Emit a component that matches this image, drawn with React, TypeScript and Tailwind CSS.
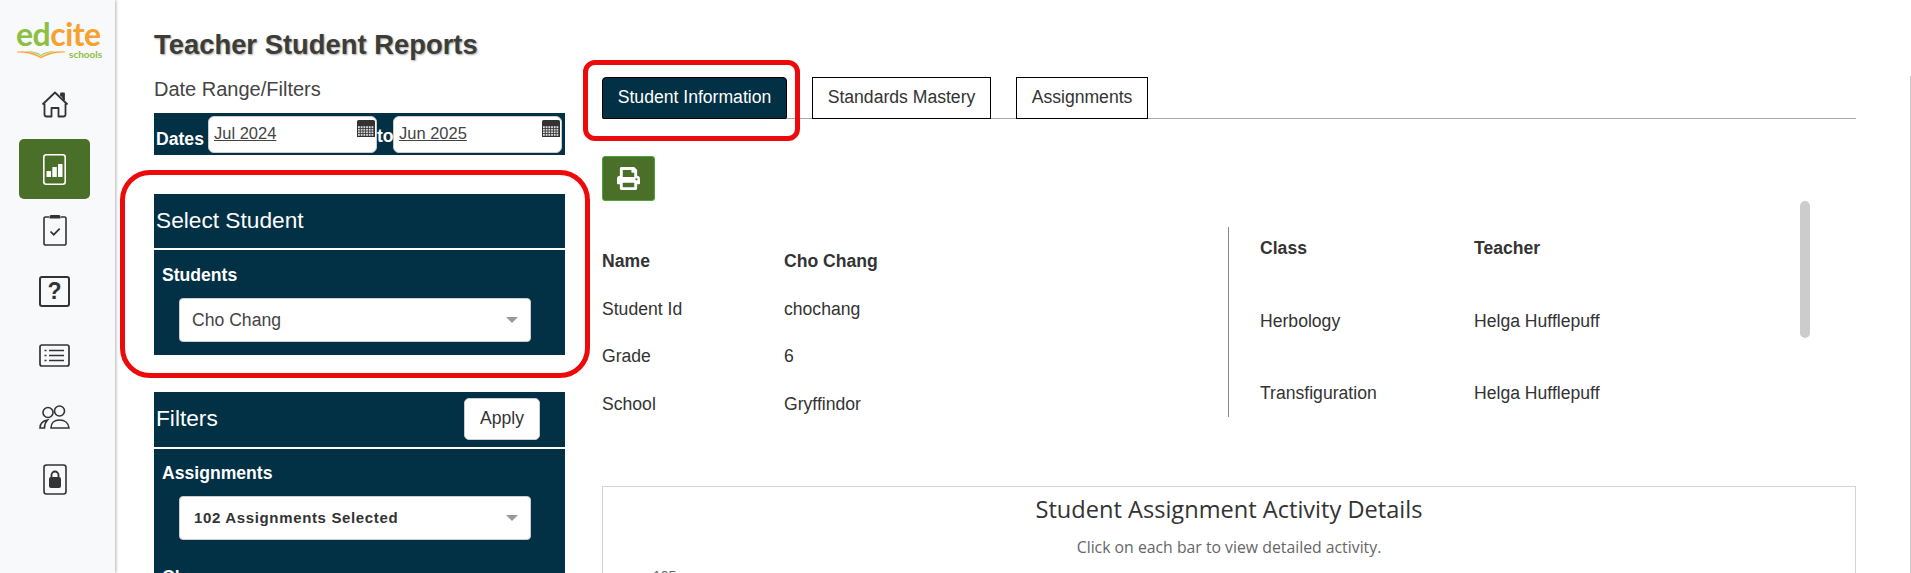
import { FaPrint } from "react-icons/fa";

const sans = "font-['Liberation_Sans',Arial,sans-serif]";

function HomeIcon() {
  return (
    <svg width="28" height="28" viewBox="0 0 28 28" fill="none" stroke="#333" strokeWidth="1.8" strokeLinejoin="round">
      <path d="M1.500 13.500 14 1.500l12.500 12" />
      <path d="M20 5V2.500h3V9" fill="#333" />
      <path d="M3.500 12.500v11.500a2 2 0 0 0 2 1.500h5v-8.500h7v8.500h5a2 2 0 0 0 2-1.500V12.500" />
    </svg>
  );
}

function ReportIcon() {
  return (
    <svg width="23" height="31" viewBox="0 0 23 31" fill="none">
      <rect x="0.800" y="0.800" width="21.400" height="29.400" rx="2.500" stroke="#fff" strokeWidth="1.600" />
      <rect x="3.500" y="17" width="4.500" height="6" rx="0.500" fill="#fff" />
      <rect x="9.300" y="13" width="4.500" height="10" rx="0.500" fill="#fff" />
      <rect x="15" y="10" width="4.500" height="13" rx="0.500" fill="#fff" />
    </svg>
  );
}

function ClipboardIcon() {
  return (
    <svg width="24" height="32" viewBox="0 0 24 32" fill="none">
      <path d="M6 3H2.500A1.500 1.500 0 0 0 1 4.500v25A1.500 1.500 0 0 0 2.500 31h19a1.500 1.500 0 0 0 1.500-1.500v-25A1.500 1.500 0 0 0 21.500 3H18" stroke="#333" strokeWidth="1.600" />
      <path d="M6.500 4.500V2.500A1.500 1.500 0 0 1 8 1h8a1.500 1.500 0 0 1 1.500 1.500v2z" fill="#333" />
      <path d="m7.500 17.500 3.200 3.200 6-6" stroke="#333" strokeWidth="1.700" />
    </svg>
  );
}

function QuestionIcon() {
  return (
    <div className="flex h-[31px] w-[31px] items-center justify-center rounded-[3px] border-2 border-[#333] text-[23px] leading-none font-bold text-[#333]">
      ?
    </div>
  );
}

function ListIcon() {
  return (
    <svg width="31" height="23" viewBox="0 0 31 23" fill="none" stroke="#333">
      <rect x="1" y="1" width="29" height="21" rx="2" strokeWidth="1.700" />
      <path d="M10 6.500h15M10 11.500h15M10 16.500h15" strokeWidth="1.700" />
      <path d="M5.500 6.500h2M5.500 11.500h2M5.500 16.500h2" strokeWidth="1.700" />
    </svg>
  );
}

function PeopleIcon() {
  return (
    <svg width="31" height="24" viewBox="0 0 31 24" fill="none" stroke="#333" strokeWidth="1.600">
      <circle cx="9" cy="7.500" r="5" />
      <circle cx="20.500" cy="6" r="5" />
      <path d="M1 23c0-4 2-7 7.500-8-2 2-3 5-3 8z" />
      <path d="M12 23c0-5 3.500-8 8.500-8s9 3 9.500 8z" />
    </svg>
  );
}

function LockIcon() {
  return (
    <svg width="24" height="31" viewBox="0 0 24 31" fill="none">
      <rect x="1" y="1" width="22" height="29" rx="2.500" stroke="#333" strokeWidth="1.600" />
      <path d="M8.500 14v-3a3.500 3.500 0 0 1 7 0v3" stroke="#333" strokeWidth="1.800" />
      <rect x="6" y="13" width="12" height="11" rx="2" fill="#333" />
    </svg>
  );
}

function CalendarIcon() {
  const cells = [];
  for (let r = 0; r < 4; r++) {
    for (let c = 0; c < 6; c++) {
      cells.push(<rect key={`${r}-${c}`} x={1 + c * 2.700} y={7.200 + r * 2.600} width="1.800" height="1.800" fill="#ddd" />);
    }
  }
  return (
    <svg width="18" height="18" viewBox="0 0 18 18">
      <path d="M0 6V2.500A1.500 1.500 0 0 1 1.500 1h15A1.500 1.500 0 0 1 18 2.500V6z" fill="#333" />
      <rect x="0" y="6" width="18" height="12" fill="#333" />
      {cells}
    </svg>
  );
}

function DateInput({ value }: { value: string }) {
  return (
    <div className="relative h-[37px] w-[169px] shrink-0 rounded-[6px] border border-[#ccc] bg-white pl-[5px] text-[16.500px] leading-[32px] text-[#444] underline">
      {value}
      <span className="absolute top-[2px] right-[1px]">
        <CalendarIcon />
      </span>
    </div>
  );
}

function SelectBox({ label, bold }: { label: string; bold?: boolean }) {
  return (
    <div className="ml-[25px] flex h-[44px] w-[352px] items-center justify-between rounded-[4px] border border-[#ccc] bg-white pr-[12px] pl-[12px]">
      <span className={bold ? "pl-[2px] text-[15px] font-bold tracking-[0.65px] text-[#333]" : "text-[17.6px] text-[#444]"}>{label}</span>
      <svg width="12" height="6" viewBox="0 0 12 6">
        <path d="M0 0h12L6 6z" fill="#999" />
      </svg>
    </div>
  );
}

const info = [
  ["Name", "Cho Chang"],
  ["Student Id", "chochang"],
  ["Grade", "6"],
  ["School", "Gryffindor"],
];

const classes = [
  ["Class", "Teacher"],
  ["Herbology", "Helga Hufflepuff"],
  ["Transfiguration", "Helga Hufflepuff"],
];

export default function App() {
  return (
    <div className={`${sans} relative flex h-[573px] w-full overflow-hidden bg-white text-[#333]`}>
      <aside className="flex w-[115px] shrink-0 flex-col bg-[#f8f9fa] pl-[19px] shadow-[1px_0_3px_rgba(0,0,0,0.3)]">
        <div className="-ml-[3px] flex h-[75px] w-[90px] flex-col pt-[19px]">
          <div className="font-['Lato',sans-serif] text-[32px] leading-[30px] font-bold tracking-[-0.5px]">
            <span className="text-[#8dbf45]">ed</span>
            <span className="text-[#f9a12e]">cite</span>
          </div>
          <div className="flex items-center">
            <svg width="50" height="9" viewBox="0 0 50 9" fill="none">
              <path d="M1 2c9-1 17 0 24 5 7-5 15-6 24-5-9 0-17 2-24 6C18 4 10 2 1 2z" fill="#f9a12e" stroke="#f9a12e" strokeWidth="0.500" />
              <path d="M10 1c6 0 11 1 15 4 4-3 9-4 14-4-5 1-10 2-14 5-4-3-9-4-15-5z" fill="#8dbf45" />
            </svg>
            <span className="ml-[3px] font-['Lato',sans-serif] text-[10px] leading-none font-bold text-[#8dbf45]">schools</span>
          </div>
        </div>
        <div className="flex h-[60px] w-[71px] items-center justify-center">
          <HomeIcon />
        </div>
        <div className="mt-[4px] flex h-[60px] w-[71px] items-center justify-center rounded-[5px] bg-[#4a6f28]">
          <ReportIcon />
        </div>
        <div className="mt-[1px] flex h-[60px] w-[71px] items-center justify-center">
          <ClipboardIcon />
        </div>
        <div className="mt-[1px] flex h-[60px] w-[71px] items-center justify-center">
          <QuestionIcon />
        </div>
        <div className="mt-[4px] flex h-[60px] w-[71px] items-center justify-center">
          <ListIcon />
        </div>
        <div className="mt-[2px] flex h-[60px] w-[71px] items-center justify-center">
          <PeopleIcon />
        </div>
        <div className="mt-[2px] flex h-[60px] w-[71px] items-center justify-center">
          <LockIcon />
        </div>
      </aside>

      <main className="min-w-0 flex-1 pl-[39px]">
        <h1 className="h-[77px] pt-[28px] text-[27.400px] leading-[34px] font-bold text-[#3d3d38] [text-shadow:1px_1px_2px_rgba(0,0,0,0.35)]">
          Teacher Student Reports
        </h1>

        <div className="flex">
          <div className="w-[411px] shrink-0">
            <div className="mb-[12px] h-[24px] text-[20px] leading-[24px] text-[#444]">Date Range/Filters</div>

            <div className="flex h-[42px] items-center bg-[#023045] pl-[2px] text-white">
              <span className="mt-[10px] w-[52px] text-[17.6px] font-bold">Dates</span>
              <DateInput value="Jul 2024" />
              <span className="mt-[4px] w-[16px] text-center text-[17.6px] font-bold">to</span>
              <DateInput value="Jun 2025" />
            </div>

            <div className="mt-[39px] flex h-[54px] items-center bg-[#023045] pb-[2px] pl-[2px] text-[22.700px] text-white">Select Student</div>
            <div className="mt-[2px] bg-[#023045] pt-[13px] pb-[13px]">
              <div className="h-[24px] pl-[8px] text-[17.6px] leading-[24px] font-bold text-white">Students</div>
              <div className="mt-[11px]">
                <SelectBox label="Cho Chang" />
              </div>
            </div>

            <div className="mt-[37px] flex h-[55px] items-center justify-between bg-[#023045] pr-[25px] pb-[2px] pl-[2px] text-[22.700px] text-white">
              Filters
              <button className="h-[42px] w-[76px] rounded-[5px] border border-[#ccc] bg-white text-[17.6px] text-[#333]">Apply</button>
            </div>
            <div className="mt-[2px] bg-[#023045] pt-[12px] pb-[20px]">
              <div className="h-[24px] pl-[8px] text-[17.6px] leading-[24px] font-bold text-white">Assignments</div>
              <div className="mt-[11px]">
                <SelectBox label="102 Assignments Selected" bold />
              </div>
              <div className="mt-[25px] h-[24px] pl-[8px] text-[17.6px] leading-[24px] font-bold text-white">Class</div>
            </div>
          </div>

          <div className="ml-[37px] w-[1254px] shrink-0">
            <div className="flex h-[42px] border-b border-[#aaa]">
              <div className="flex h-[42px] w-[185px] items-center justify-center rounded-t-[4px] rounded-b-[2px] border border-black bg-[#023045] pb-[2px] text-[17.6px] text-white">
                Student Information
              </div>
              <div className="ml-[25px] flex h-[42px] w-[179px] items-center justify-center border border-black bg-white pb-[2px] text-[17.6px] text-[#333]">
                Standards Mastery
              </div>
              <div className="ml-[25px] flex h-[42px] w-[132px] items-center justify-center border border-black bg-white pb-[2px] text-[17.6px] text-[#333]">
                Assignments
              </div>
            </div>

            <button className="mt-[37px] flex h-[45px] w-[53px] items-center justify-center rounded-[3px] border border-[#4fa33b] bg-[#4a6f28]">
              <FaPrint className="text-[23px] text-white" />
            </button>

            <div className="relative mt-[26px] flex h-[190px]">
              <div className="grid h-full w-[626px] shrink-0 grid-cols-[182px_1fr] content-start gap-y-[23.500px] pt-[22px] text-[17.6px] leading-[24px]">
                {info.map(([label, value], i) => (
                  <div key={label} className={i === 0 ? "col-span-2 grid grid-cols-subgrid font-bold" : "col-span-2 grid grid-cols-subgrid"}>
                    <span>{label}</span>
                    <span>{value}</span>
                  </div>
                ))}
              </div>
              <div className="grid h-full flex-1 grid-cols-[214px_1fr] content-start gap-y-[48.500px] border-l border-[#888] pt-[9px] pl-[31px] text-[17.6px] leading-[24px]">
                {classes.map(([name, teacher], i) => (
                  <div key={name} className={i === 0 ? "col-span-2 grid grid-cols-subgrid font-bold" : "col-span-2 grid grid-cols-subgrid"}>
                    <span>{name}</span>
                    <span>{teacher}</span>
                  </div>
                ))}
              </div>
              <div className="absolute top-[-26px] left-[1198px] h-[137px] w-[10px] rounded-[5px] bg-[#ccc]" />
            </div>

            <div className="mt-[69px] h-[200px] border border-[#d4d4d4] text-center">
              <div className="mt-[7px] font-['Open_Sans',sans-serif] text-[23.600px] leading-[30px] text-[#333]">Student Assignment Activity Details</div>
              <div className="mt-[12px] font-['Open_Sans',sans-serif] text-[15.800px] leading-[22px] text-[#666]">Click on each bar to view detailed activity.</div>
              <div className="mt-[10px] pl-[50px] text-left text-[14px] leading-[16px] text-[#666]">105</div>
            </div>
          </div>
        </div>
      </main>

      <div className="absolute top-[170px] left-[120px] h-[208px] w-[470px] rounded-[30px] border-[5px] border-[#ec0a0a]" />
      <div className="absolute top-[60px] left-[583px] h-[81px] w-[217px] rounded-[12px] border-[5px] border-[#ec0a0a]" />
      <div className="absolute top-[76px] right-0 h-[497px] w-px bg-[#ccc]" />
    </div>
  );
}
